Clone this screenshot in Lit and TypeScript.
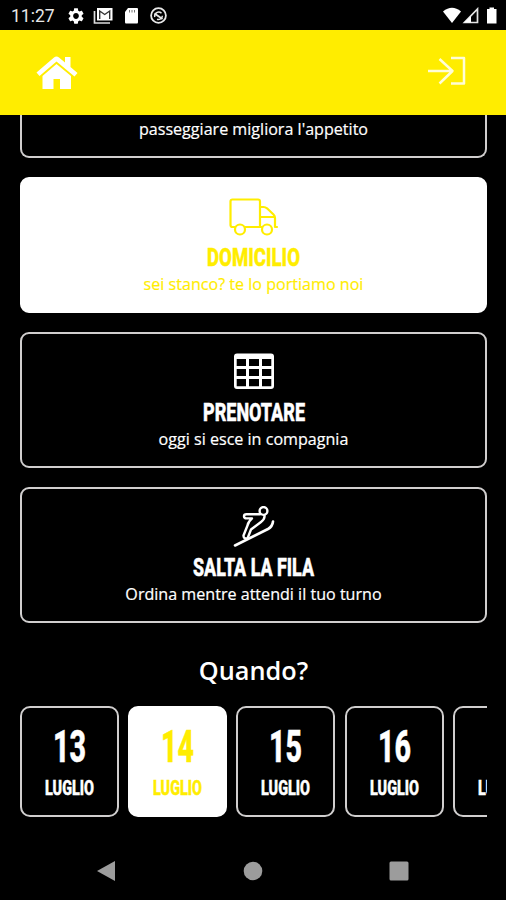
import { LitElement, html, css, svg } from "lit";
import { customElement, property } from "lit/decorators.js";
import { classMap } from "lit/directives/class-map.js";

// Condensed heading: real text squeezed to a set width.
@customElement("narrow-text")
class NarrowText extends LitElement {
  @property() text = "";
  @property({ type: Number }) width = 90;
  @property({ type: Number }) size = 26;
  static styles = css`
    :host { display: block; }
    svg { display: block; margin: 0 auto; overflow: visible; }
    text { font-family: Roboto, "Liberation Sans", sans-serif; font-weight: 800; fill: currentColor; stroke: currentColor; stroke-width: 0.5px; }
  `;
  render() {
    const h = Math.round(this.size * 0.72);
    return html`<svg width=${this.width} height=${h}>
      <text x="0" y=${h} font-size=${this.size} textLength=${this.width} lengthAdjust="spacingAndGlyphs">${this.text}</text>
    </svg>`;
  }
}

const truck = svg`<svg width="52" height="40" viewBox="0.5 0 52 40" fill="none" stroke="currentColor" stroke-width="2.2" stroke-linejoin="round" stroke-linecap="round">
  <path d="M7 31H5Q3 31 3 29V5.500Q3 3.500 5 3.500H30.500Q32.500 3.500 32.500 5.500V31H18"/>
  <path d="M32.500 11H36Q38 11 39.500 12.300L46 18.500Q47.500 20 47.500 22V31H49.500M47 21H33.500M32.500 31H34"/>
  <circle cx="12.500" cy="33.500" r="5"/><circle cx="39.500" cy="33.500" r="5"/></svg>`;

const table = svg`<svg width="42" height="40" viewBox="0 0 42 40">
  <path fill="currentColor" fill-rule="evenodd" d="M4 2.500H38Q41 2.500 41 5.500V35Q41 38 38 38H4Q1 38 1 35V5.500Q1 2.500 4 2.500ZM3.700 8V15H13V8ZM16 8V15H26V8ZM29 8V15H38.300V8ZM3.700 18V25H13V18ZM16 18V25H26V18ZM29 18V25H38.300V18ZM3.700 28V35.300H13V28ZM16 28V35.300H26V28ZM29 28V35.300H38.300V28Z"/></svg>`;

const skier = svg`<svg width="42" height="42" viewBox="0 0 42 42" fill="none" stroke="currentColor" stroke-width="2.4" stroke-linejoin="round" stroke-linecap="round">
  <path stroke-width="2.600" d="M2 39.500L35 23Q39.500 20.500 40 15.500"/>
  <circle cx="30.500" cy="5" r="3.900"/>
  <path d="M27 8.200H13.500Q11 8.200 11 10.200Q11 12.400 13.500 12.400H19Q15 16 14.500 19.500L10.500 29.500Q10.300 33 14.500 32.500L18 23.500L28 16Q32 13 31.500 9.500"/></svg>`;

const services = [
  { title: "DOMICILIO", width: 93, note: "sei stanco? te lo portiamo noi", icon: truck, on: true },
  { title: "PRENOTARE", width: 102, note: "oggi si esce in compagnia", icon: table, on: false },
  { title: "SALTA LA FILA", width: 121, note: "Ordina mentre attendi il tuo turno", icon: skier, on: false },
];

@customElement("app-root")
class AppRoot extends LitElement {
  static styles = css`
    :host { display: flex; flex-direction: column; width: 506px; height: 900px; overflow: hidden; background: #000; color: #fff; font-family: "Open Sans", "Noto Sans", sans-serif; }
    * { box-sizing: border-box; }
    svg { display: block; }
    .status { height: 30px; flex: none; display: flex; align-items: center; padding: 2px 7px 0 11px; font: 400 17.500px/30px Roboto, sans-serif; color: #e8e8e8; }
    .time { width: 57px; }
    .grow { flex: 1; }
    header { height: 85px; flex: none; background: #ffed00; display: flex; justify-content: space-between; padding: 25px 40px 0 36px; }
    main { flex: none; height: 725px; padding: 0 19px 0 20px; }
    .card { height: 136px; border: 2px solid #d0cece; border-radius: 9px; margin-bottom: 19px; padding-top: 17px; display: flex; flex-direction: column; align-items: center; }
    .card.on, .day.on { background: #fff; border-color: #fff; color: #ffed00; }
    .icon { height: 42px; display: flex; align-items: flex-start; margin-bottom: 9px; }
    .card.first { height: 43px; border-top: 0; border-radius: 0 0 9px 9px; padding-top: 3px; margin-bottom: 19px; }
    .note { font-size: 16.100px; line-height: 22px; white-space: nowrap; -webkit-text-stroke: 0.200px currentColor; }
    .card .note { margin-top: 7px; }
    .card.first .note { margin-top: 0; }
    h2 { margin: 30px 0 0; height: 34px; font-weight: 600; font-size: 25.300px; line-height: 34px; text-align: center; }
    .days { display: flex; gap: 9.200px; margin-top: 19px; overflow: hidden; }
    .day { width: 99px; height: 111px; flex: none; border: 2px solid #d0cece; border-radius: 10px; padding-top: 22px; display: flex; flex-direction: column; gap: 19px; align-items: center; }
    .nav { flex: none; height: 60px; display: flex; justify-content: space-between; align-items: center; padding: 2px 97px 0 96px; color: #9c9c9c; }
  `;
  render() {
    return html`
      <div class="status">
        <span class="time">11:27</span>
        <svg width="16" height="18" viewBox="2 1 20 22"><path fill="#fff" d="M19.140 12.940c.04-.3.06-.61.06-.94 0-.32-.02-.64-.07-.94l2.030-1.580c.18-.14.23-.41.12-.61l-1.920-3.320c-.12-.22-.37-.29-.59-.22l-2.390.96c-.5-.38-1.030-.7-1.620-.94l-.36-2.540c-.04-.24-.24-.41-.48-.41h-3.840c-.24 0-.43.17-.47.41l-.36 2.540c-.59.24-1.130.57-1.620.94l-2.390-.96c-.22-.08-.47 0-.59.22L2.740 8.870c-.12.21-.08.47.12.61l2.030 1.580c-.05.3-.09.63-.09.94s.02.64.07.94l-2.030 1.580c-.18.14-.23.41-.12.61l1.920 3.320c.12.22.37.29.59.22l2.390-.96c.5.38 1.030.7 1.620.94l.36 2.540c.05.24.24.41.48.41h3.840c.24 0 .44-.17.47-.41l.36-2.540c.59-.24 1.130-.56 1.620-.94l2.390.96c.22.08.47 0 .59-.22l1.920-3.320c.12-.22.07-.47-.12-.61l-2.010-1.580zM12 15.600c-1.980 0-3.600-1.620-3.600-3.600s1.620-3.600 3.600-3.600 3.600 1.620 3.600 3.600-1.620 3.600-3.600 3.600z"/></svg>
        <svg width="30" height="18" viewBox="0 0 30 18"><path d="M10.500 4V16H26" fill="none" stroke="#ddd" stroke-width="1.700"/><path d="M13 1H28.500V13.500H13Z" fill="#fff"/><path d="M15.700 12V4L20.700 7.500L25.700 4V12" fill="none" stroke="#333" stroke-width="1.400"/></svg>
        <svg width="26" height="18" viewBox="0 0 26 18"><path d="M14 1H23Q24 1 24 2V15Q24 16.500 23 16.500H12Q11 16.500 11 15V5Z" fill="#fff"/><path d="M15.500 3V5.500M18 3V5.500M20.500 3V5.500" stroke="#777" stroke-width="1"/></svg>
        <svg width="34" height="18" viewBox="1 0 34 18" fill="none" stroke="#e8e8e8"><circle cx="19.500" cy="8.500" r="7.400" stroke-width="1.800"/><path d="M15.800 10A4 4 0 0 1 22.500 6.200M23.400 8.800A4 4 0 0 1 18 12.200" stroke-width="1.500"/><path d="M15.500 6.500L23.500 12" stroke-width="1.900"/></svg>
        <span class="grow"></span>
        <svg width="56" height="18" viewBox="0 0 56 18" fill="#fff"><path d="M0 4.500Q9 -3 18 4.500L9 16Z"/><path d="M34.500 2V15.500H21.500Z" fill="none" stroke="#e4e4e4" stroke-width="1.700"/><path d="M28 9V15.500H21Z"/><path d="M46.500 0.500H51V2H53.500V16.500H44V2H46.500Z"/></svg>
      </div>
      <header>
        <svg width="42" height="36" viewBox="0 0 42 36" fill="#fff"><path d="M0.500 17.500L18 2.500Q20.500 0.500 23 2.500L29 7.500V2H34.500V12L41.500 18L38.500 21.500L20.500 6.500L3.500 21Z"/><path d="M6.500 21L20.500 9L35 21V34H24V24H17.500V34H6.500Z"/></svg>
        <svg width="39" height="34" viewBox="0 0 39 34" fill="none" stroke="#fffdd8" stroke-width="2.500" stroke-linejoin="round"><path d="M1 16H25.500M12.500 4L25.500 16L12.500 28.500M24 3H37V28.500H24"/></svg>
      </header>
      <main>
        <section class="card first"><div class="note">passeggiare migliora l'appetito</div></section>
        ${services.map(s => html`
          <section class=${classMap({ card: true, on: s.on })}>
            <div class="icon">${s.icon}</div>
            <narrow-text .text=${s.title} .width=${s.width} .size=${26.5}></narrow-text>
            <div class="note">${s.note}</div>
          </section>`)}
        <h2>Quando?</h2>
        <div class="days">
          ${[13, 14, 15, 16, 17].map(d => html`
            <div class=${classMap({ day: true, on: d === 14 })}>
              <narrow-text .text=${String(d)} .width=${33} .size=${44}></narrow-text>
              <narrow-text .text=${"LUGLIO"} .width=${49} .size=${19.5}></narrow-text>
            </div>`)}
        </div>
      </main>
      <div class="nav">
        <svg width="20" height="22" viewBox="0 0 20 22" fill="currentColor"><path d="M1 11L19 1V21Z"/></svg>
        <svg width="20" height="20" viewBox="0 0 20 20" fill="currentColor"><circle cx="10" cy="10" r="9.300"/></svg>
        <svg width="20" height="20" viewBox="0 0 20 20" fill="currentColor"><rect x="0.500" y="0.500" width="19" height="19" rx="1.500"/></svg>
      </div>`;
  }
}
